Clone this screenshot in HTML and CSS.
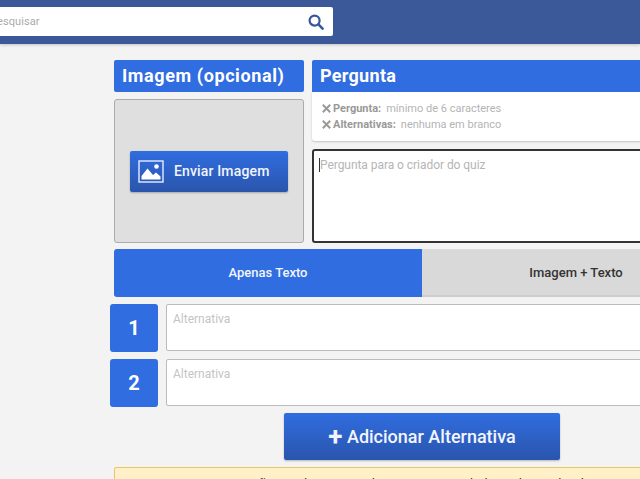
FILE: index.html
```html
<!DOCTYPE html>
<html lang="pt-BR">
<head>
    <meta charset="UTF-8">
    <meta name="viewport" content="width=device-width, initial-scale=1.0">
    <title>Criar Quiz</title>
    <link rel="stylesheet" href="styles.css">
</head>
<body>

<header class="topbar">
    <div class="search">
        <span class="search-text">Pesquisar</span>
        <svg class="search-icon" viewBox="0 0 16 16" width="16" height="16">
            <circle cx="6.6" cy="6.6" r="5" fill="none" stroke="#36579a" stroke-width="2.2"/>
            <path d="M10.4 10.4 L14.6 14.6" stroke="#36579a" stroke-width="2.6" stroke-linecap="round"/>
        </svg>
    </div>
</header>

<main class="content">
    <div class="columns">
        <section class="col-image">
            <h2 class="title">Imagem (opcional)</h2>
            <div class="image-box">
                <button class="btn btn-upload">
                    <svg viewBox="0 0 26 23" width="26" height="23">
                        <rect x="1" y="1" width="24" height="21" fill="none" stroke="#e6edfb" stroke-width="1.4"/>
                        <circle cx="18.5" cy="6.5" r="2.3" fill="#fff"/>
                        <path d="M3.5 19.5 V16 L9.5 8.5 L15 15 L18 12.5 L22.5 16.5 V19.5 Z" fill="#fff"/>
                    </svg>
                    <span>Enviar Imagem</span>
                </button>
            </div>
        </section>
        <section class="col-question">
            <h2 class="title">Pergunta</h2>
            <div class="rules">
                <p>
                    <svg class="cross" viewBox="0 0 9 9" width="9" height="9"><path d="M0.8 0.8 L8.2 8.2 M8.2 0.8 L0.8 8.2" stroke="#999" stroke-width="2"/></svg>
                    <b>Pergunta:</b><span>mínimo de 6 caracteres</span>
                </p>
                <p>
                    <svg class="cross" viewBox="0 0 9 9" width="9" height="9"><path d="M0.8 0.8 L8.2 8.2 M8.2 0.8 L0.8 8.2" stroke="#999" stroke-width="2"/></svg>
                    <b>Alternativas:</b><span>nenhuma em branco</span>
                </p>
            </div>
            <div class="question-input"><i class="caret"></i>Pergunta para o criador do quiz</div>
        </section>
    </div>

    <div class="tabs">
        <div class="tab tab-active">Apenas Texto</div>
        <div class="tab">Imagem + Texto</div>
    </div>

    <div class="answer">
        <div class="answer-num">1</div>
        <div class="answer-input">Alternativa</div>
    </div>
    <div class="answer">
        <div class="answer-num">2</div>
        <div class="answer-input">Alternativa</div>
    </div>

    <button class="btn btn-add"><b>+</b> Adicionar Alternativa</button>

    <div class="warning">Atenção: as alternativas devem ser preenchidas pelo criador do quiz</div>
</main>

</body>
</html>
```

FILE: styles.css
```css
html, body {
    height: 479px;
    overflow: hidden;
}
body {
    margin: 0;
    background-color: #f3f3f3;
    font-family: Roboto, "Liberation Sans", sans-serif;
}
.topbar {
    height: 44px;
    background-color: #3b5998;
    box-shadow: 0 1px 3px rgba(0, 0, 0, 0.2);
    padding-top: 7px;
    box-sizing: border-box;
}
.search {
    width: 368px;
    height: 29px;
    margin-left: -35px;
    background-color: #fff;
    border-radius: 2px;
    display: flex;
    align-items: center;
    justify-content: space-between;
    padding: 0 9px 0 25px;
    box-sizing: border-box;
}
.search-text {
    font-size: 11px;
    letter-spacing: 0.1px;
    color: #aaa;
}
.content {
    width: 616px;
    margin-left: 114px;
    padding-top: 16px;
}
.columns {
    display: flex;
    gap: 8px;
}
.col-image {
    width: 190px;
    flex: none;
}
.col-question {
    width: 418px;
    flex: none;
}
.title {
    margin: 0;
    height: 32px;
    line-height: 32px;
    padding-left: 8px;
    background-color: #306de0;
    color: #fff;
    font-size: 18px;
    font-weight: 700;
    letter-spacing: 0.3px;
    border-radius: 2px;
}
.col-image .title {
    letter-spacing: 0.6px;
}
.col-question .title {
    border-radius: 2px 2px 0 0;
}
.image-box {
    height: 144px;
    margin-top: 7px;
    background-color: #dfdfdf;
    border: 1px solid #ababab;
    border-radius: 3px;
    box-sizing: border-box;
    display: flex;
    align-items: center;
    justify-content: center;
}
.btn {
    border: none;
    border-radius: 2px;
    color: #f2f5fd;
    background: linear-gradient(#306de0, #2a55ac);
    font-family: inherit;
    font-weight: 500;
    box-shadow: 0 1px 2px rgba(0, 0, 0, 0.25);
}
.btn-upload {
    width: 158px;
    height: 41px;
    padding: 0 0 0 8px;
    display: flex;
    align-items: center;
    gap: 10px;
    font-size: 14px;
    letter-spacing: 0.15px;
}
.rules {
    height: 49px;
    padding: 10px 0 0 10px;
    box-sizing: border-box;
    background-color: #fff;
    border-radius: 0 0 3px 3px;
    box-shadow: 0 1px 2px rgba(0, 0, 0, 0.2);
    font-size: 11px;
    color: #b4b4b4;
}
.rules p {
    display: flex;
    align-items: center;
    gap: 2px;
    margin: 0 0 2px;
    line-height: 14px;
}
.rules b {
    color: #999;
    margin-right: 3px;
}
.cross {
    margin-bottom: 2px;
}
.question-input {
    height: 94px;
    margin-top: 8px;
    padding: 7px 5px;
    box-sizing: border-box;
    background-color: #fff;
    border: 2px solid #333;
    border-radius: 3px;
    font-size: 12px;
    letter-spacing: -0.05px;
    line-height: 14px;
    color: #b5b5b5;
}
.caret {
    display: inline-block;
    width: 1px;
    height: 14px;
    background-color: #333;
    vertical-align: top;
}
.tabs {
    display: flex;
    height: 48px;
    margin-top: 6px;
}
.tab {
    flex: 1;
    display: flex;
    align-items: center;
    justify-content: center;
    background-color: #d9d9d9;
    border-bottom: 2px solid #cdcdcd;
    color: #333;
    font-size: 13px;
    font-weight: 500;
}
.tab-active {
    background-color: #306de0;
    border-bottom: 2px solid #306de0;
    color: #f2f5fd;
    border-radius: 3px 0 0 3px;
}
.answer {
    display: flex;
    gap: 8px;
    margin: 7px 0 0 -4px;
}
.answer-num {
    width: 48px;
    height: 48px;
    flex: none;
    display: flex;
    align-items: center;
    justify-content: center;
    background-color: #306de0;
    color: #fff;
    font-size: 20px;
    font-weight: 700;
    border-radius: 3px;
}
.answer-input {
    flex: 1;
    height: 47px;
    padding: 7px 6px;
    box-sizing: border-box;
    background-color: #fff;
    border: 1px solid #bbb;
    border-radius: 2px;
    font-size: 12px;
    line-height: 14px;
    color: #c4c4c4;
}
.btn-add {
    display: block;
    width: 276px;
    height: 47px;
    margin: 6px auto 0;
    font-size: 18px;
}
.btn-add b {
    font-size: 26px;
    line-height: 16px;
    vertical-align: -2px;
}
.warning {
    height: 48px;
    margin-top: 7px;
    padding-top: 8px;
    box-sizing: border-box;
    background-color: #fff0c8;
    border: 1px solid #e5c76b;
    border-radius: 2px;
    text-align: center;
    font-size: 13px;
    color: #333;
}
```
